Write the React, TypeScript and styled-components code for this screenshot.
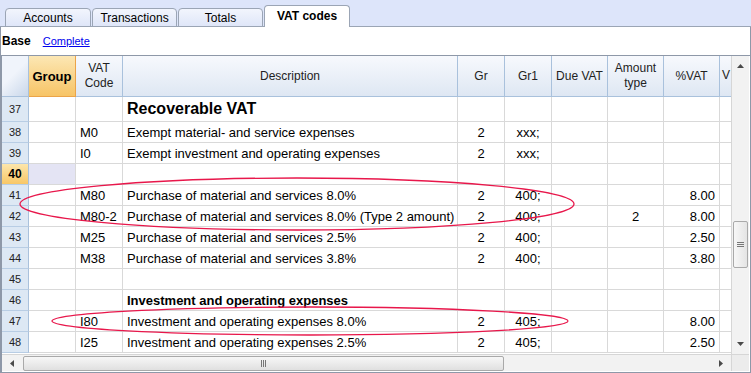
import React from "react";
import styled, { createGlobalStyle, css } from "styled-components";

const GlobalStyle = createGlobalStyle`
  html, body { margin: 0; padding: 0; background: #fff; }
  body { font-family: "Liberation Sans", Arial, sans-serif; color: #000; }
`;

// last column is cut off by the vertical scrollbar
const COLS = "27px 47px 47px 335px 47px 47px 56px 56px 56px 11px";

const Page = styled.div`
  position: relative;
  width: 751px;
  height: 373px;
  overflow: hidden;
  display: flex;
  flex-direction: column;
`;

const TabStrip = styled.div`
  height: 27px;
  flex: none;
  box-sizing: border-box;
  display: flex;
  align-items: flex-end;
  gap: 1px;
  padding-left: 5px;
  background: linear-gradient(to top, #9ba5b5 1px, #dde5fa 1px);
`;

const Tab = styled.div<{ $active?: boolean; $w: number }>`
  width: ${(p) => p.$w}px;
  box-sizing: border-box;
  border: 1px solid #9ba5b5;
  border-radius: 4px 4px 0 0;
  display: flex;
  align-items: center;
  justify-content: center;
  font-family: "Liberation Sans", Tahoma, sans-serif;
  font-size: 12px;
  ${(p) =>
    p.$active
      ? css`
          height: 22px;
          border-bottom: none;
          background: #fff;
          font-weight: bold;
          padding-bottom: 2px;
        `
      : css`
          height: 19px;
          background: linear-gradient(#f2f5fd, #dfe6f8);
        `}
`;

const Panel = styled.div`
  flex: 1;
  display: flex;
  flex-direction: column;
  border-left: 1px solid #8e98a8;
  border-right: 1px solid #8e98a8;
  border-bottom: 1px solid #8e98a8;
  min-height: 0;
`;

const ViewBar = styled.div`
  height: 28px;
  flex: none;
  display: flex;
  align-items: center;
  gap: 12px;
  padding-left: 1px;
  font-family: "Liberation Sans", Tahoma, sans-serif;
  font-size: 11px;
`;

const ViewName = styled.span<{ $link?: boolean }>`
  ${(p) =>
    p.$link
      ? css`
          color: #0000ee;
          text-decoration: underline;
        `
      : css`
          font-weight: bold;
          font-size: 12px;
        `}
`;

const GridFrame = styled.div`
  flex: 1;
  display: grid;
  grid-template-columns: 729px 18px;
  grid-template-rows: 298px 17px;
  border-left: 1px solid #8e98a8;
  border-top: 1px solid #8e98a8;
`;

const Viewport = styled.div`
  overflow: hidden;
  display: flex;
  flex-direction: column;
`;

const Row = styled.div<{ $h: number }>`
  display: grid;
  grid-template-columns: ${COLS};
  height: ${(p) => p.$h}px;
  flex: none;
`;

const HeadCell = styled.div<{ $group?: boolean; $corner?: boolean; $cut?: boolean }>`
  box-sizing: border-box;
  display: flex;
  align-items: center;
  justify-content: center;
  text-align: center;
  line-height: 15px;
  font-family: "Liberation Sans", Tahoma, sans-serif;
  font-size: 12px;
  color: #222;
  border-right: 1px solid #a9c1dc;
  border-bottom: 1px solid #a9c1dc;
  background: linear-gradient(#f7f9fd, #dee7f3);
  white-space: nowrap;
  overflow: hidden;
  ${(p) =>
    p.$group &&
    css`
      background: linear-gradient(#fce7b4, #f7c466);
      border-right-color: #eba449;
      border-bottom-color: #eba449;
      font-weight: bold;
      font-size: 13px;
      color: #000;
    `}
  ${(p) =>
    p.$corner &&
    css`
      background: linear-gradient(135deg, #f0f4fb 45%, #c9d7ea);
    `}
  ${(p) =>
    p.$cut &&
    css`
      border-right: none;
      justify-content: flex-start;
      align-items: flex-start;
      padding: 12px 0 0 2px;
    `}
`;

const NumCell = styled.div<{ $sel?: boolean }>`
  box-sizing: border-box;
  display: flex;
  align-items: center;
  justify-content: center;
  font-family: "Liberation Sans", Tahoma, sans-serif;
  font-size: 11px;
  color: #222;
  background: #dde8f4;
  border-right: 1px solid #a9c1dc;
  border-bottom: 1px solid #b8cde4;
  ${(p) =>
    p.$sel &&
    css`
      background: linear-gradient(#fde6ab, #f8c767);
      font-weight: bold;
      font-size: 12px;
      color: #000;
    `}
`;

const Cell = styled.div<{
  $align?: "left" | "center" | "right";
  $kind?: "title" | "section";
  $sel?: boolean;
  $last?: boolean;
}>`
  box-sizing: border-box;
  display: flex;
  align-items: center;
  justify-content: ${(p) =>
    p.$align === "center" ? "center" : p.$align === "right" ? "flex-end" : "flex-start"};
  padding: 0 4px;
  font-size: 13px;
  white-space: nowrap;
  overflow: hidden;
  border-right: ${(p) => (p.$last ? "none" : "1px solid #d9d9d9")};
  border-bottom: 1px solid #d9d9d9;
  background: ${(p) => (p.$sel ? "#e4e4f4" : "#fff")};
  ${(p) =>
    p.$kind === "title" &&
    css`
      font-size: 16px;
      font-weight: bold;
    `}
  ${(p) =>
    p.$kind === "section" &&
    css`
      font-weight: bold;
    `}
`;

const VScroll = styled.div`
  grid-row: 1;
  grid-column: 2;
  box-sizing: border-box;
  border-left: 1px solid #d6d6d6;
  background: #f2f2f2;
  display: flex;
  flex-direction: column;
  align-items: center;
  padding: 2px 0;
`;

const HScroll = styled.div`
  grid-row: 2;
  grid-column: 1;
  box-sizing: border-box;
  border-top: 1px solid #d6d6d6;
  background: #f2f2f2;
  display: flex;
  align-items: center;
  padding: 0 2px;
`;

const Corner = styled.div`
  grid-row: 2;
  grid-column: 2;
  background: #ececec;
  border-top: 1px solid #d6d6d6;
  border-left: 1px solid #d6d6d6;
`;

const ArrowBox = styled.div`
  width: 16px;
  height: 16px;
  flex: none;
  display: flex;
  align-items: center;
  justify-content: center;
`;

const Track = styled.div`
  flex: 1;
  align-self: stretch;
  display: flex;
`;

const Thumb = styled.div<{ $vertical?: boolean }>`
  box-sizing: border-box;
  border: 1px solid #a9a9a9;
  border-radius: 2px;
  display: flex;
  align-items: center;
  justify-content: center;
  ${(p) =>
    p.$vertical
      ? css`
          width: 15px;
          height: 47px;
          margin: 147px auto 0;
          background: linear-gradient(to right, #f7f7f7, #e4e4e4);
        `
      : css`
          height: 15px;
          width: 481px;
          margin: auto 0 auto 3px;
          background: linear-gradient(#f7f7f7, #e0e0e0);
        `}
`;

const Overlay = styled.svg`
  position: absolute;
  left: 0;
  top: 0;
  pointer-events: none;
`;

type Data = {
  n: number;
  code?: string;
  desc?: string;
  kind?: "title" | "section";
  gr?: string;
  gr1?: string;
  amt?: string;
  pct?: string;
  sel?: boolean;
};

const rows: Data[] = [
  { n: 37, desc: "Recoverable VAT", kind: "title" },
  { n: 38, code: "M0", desc: "Exempt material- and service expenses", gr: "2", gr1: "xxx;" },
  { n: 39, code: "I0", desc: "Exempt investment and operating expenses", gr: "2", gr1: "xxx;" },
  { n: 40, sel: true },
  { n: 41, code: "M80", desc: "Purchase of material and services 8.0%", gr: "2", gr1: "400;", pct: "8.00" },
  {
    n: 42,
    code: "M80-2",
    desc: "Purchase of material and services 8.0% (Type 2 amount)",
    gr: "2",
    gr1: "400;",
    amt: "2",
    pct: "8.00",
  },
  { n: 43, code: "M25", desc: "Purchase of material and services 2.5%", gr: "2", gr1: "400;", pct: "2.50" },
  { n: 44, code: "M38", desc: "Purchase of material and services 3.8%", gr: "2", gr1: "400;", pct: "3.80" },
  { n: 45 },
  { n: 46, desc: "Investment and operating expenses", kind: "section" },
  { n: 47, code: "I80", desc: "Investment and operating expenses 8.0%", gr: "2", gr1: "405;", pct: "8.00" },
  { n: 48, code: "I25", desc: "Investment and operating expenses 2.5%", gr: "2", gr1: "405;", pct: "2.50" },
];

function Arrow({ dir }: { dir: "up" | "down" | "left" | "right" }) {
  const pts = {
    up: "0,4 7,4 3.5,0",
    down: "0,0 7,0 3.5,4",
    left: "4,0 4,7 0,3.5",
    right: "0,0 0,7 4,3.5",
  }[dir];
  const vertical = dir === "up" || dir === "down";
  return (
    <svg width={vertical ? 7 : 4} height={vertical ? 4 : 7}>
      <polygon points={pts} fill="#4a4a4a" />
    </svg>
  );
}

function Grip({ vertical }: { vertical?: boolean }) {
  return vertical ? (
    <svg width="7" height="6">
      <path d="M0 0.5h7M0 2.5h7M0 4.5h7" stroke="#777" strokeWidth="1" />
    </svg>
  ) : (
    <svg width="6" height="7">
      <path d="M0.5 0v7M2.5 0v7M4.5 0v7" stroke="#777" strokeWidth="1" />
    </svg>
  );
}

export default function App() {
  return (
    <Page>
      <GlobalStyle />
      <TabStrip>
        <Tab $w={86}>Accounts</Tab>
        <Tab $w={85}>Transactions</Tab>
        <Tab $w={85}>Totals</Tab>
        <Tab $w={86} $active>
          VAT codes
        </Tab>
      </TabStrip>
      <Panel>
        <ViewBar>
          <ViewName>Base</ViewName>
          <ViewName $link>Complete</ViewName>
        </ViewBar>
        <GridFrame>
          <Viewport>
            <Row $h={41}>
              <HeadCell $corner />
              <HeadCell $group>Group</HeadCell>
              <HeadCell>
                VAT
                <br />
                Code
              </HeadCell>
              <HeadCell>Description</HeadCell>
              <HeadCell>Gr</HeadCell>
              <HeadCell>Gr1</HeadCell>
              <HeadCell>Due VAT</HeadCell>
              <HeadCell>
                Amount
                <br />
                type
              </HeadCell>
              <HeadCell>%VAT</HeadCell>
              <HeadCell $cut>V</HeadCell>
            </Row>
            {rows.map((r) => (
              <Row key={r.n} $h={r.kind === "title" ? 25 : 21}>
                <NumCell $sel={r.sel}>{r.n}</NumCell>
                <Cell $sel={r.sel} />
                <Cell>{r.code}</Cell>
                <Cell $kind={r.kind}>{r.desc}</Cell>
                <Cell $align="center">{r.gr}</Cell>
                <Cell $align="center">{r.gr1}</Cell>
                <Cell />
                <Cell $align="center">{r.amt}</Cell>
                <Cell $align="right">{r.pct}</Cell>
                <Cell $last />
              </Row>
            ))}
          </Viewport>
          <VScroll>
            <ArrowBox>
              <Arrow dir="up" />
            </ArrowBox>
            <Track>
              <Thumb $vertical>
                <Grip vertical />
              </Thumb>
            </Track>
            <ArrowBox>
              <Arrow dir="down" />
            </ArrowBox>
          </VScroll>
          <HScroll>
            <ArrowBox>
              <Arrow dir="left" />
            </ArrowBox>
            <Track>
              <Thumb>
                <Grip />
              </Thumb>
            </Track>
            <ArrowBox>
              <Arrow dir="right" />
            </ArrowBox>
          </HScroll>
          <Corner />
        </GridFrame>
      </Panel>
      <Overlay width="751" height="373" viewBox="0 0 751 373">
        <ellipse cx="297" cy="204" rx="277" ry="26" fill="none" stroke="#e8174b" strokeWidth="1.3" />
        <ellipse cx="310" cy="321" rx="258" ry="14" fill="none" stroke="#e8174b" strokeWidth="1.3" />
      </Overlay>
    </Page>
  );
}
